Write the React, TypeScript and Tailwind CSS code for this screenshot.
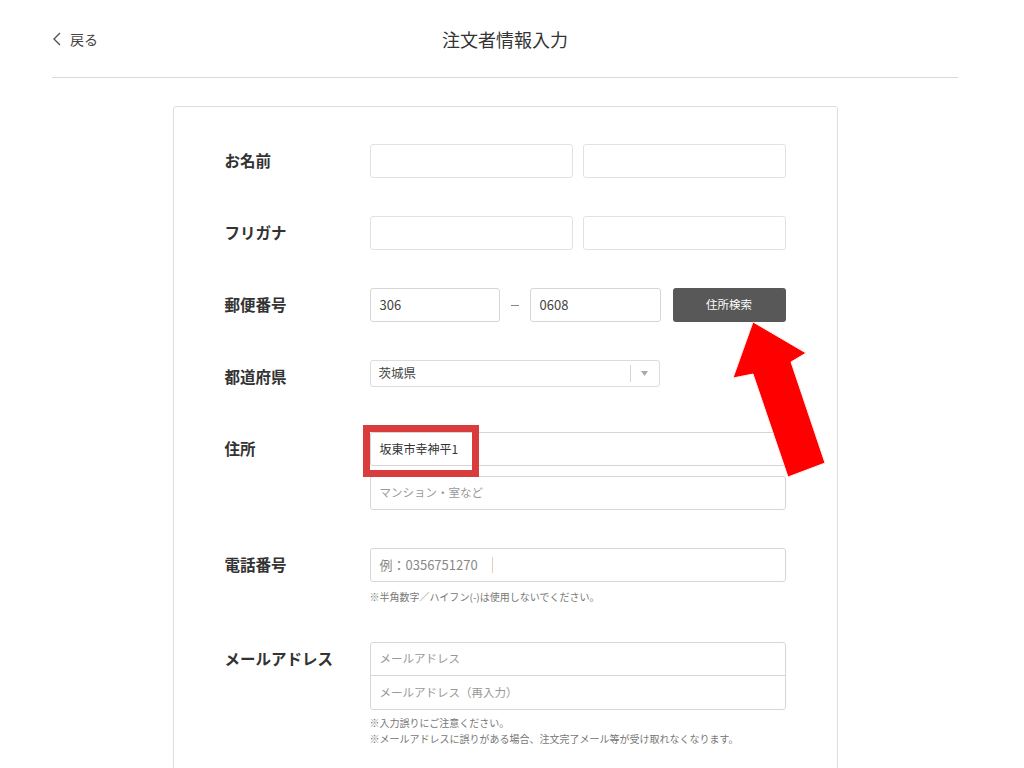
import React from "react";

const font = "font-['Noto_Sans_CJK_JP','Noto_Sans',sans-serif]";

function Row({ label, children }: { label: string; children: React.ReactNode }) {
  return (
    <div className="flex">
      <div className="w-[145px] h-[34px] flex items-center text-[15.5px] font-bold text-[#333] shrink-0">
        {label}
      </div>
      <div className="w-[416px]">{children}</div>
    </div>
  );
}

function Box({ className = "", children }: { className?: string; children?: React.ReactNode }) {
  return (
    <div className={`h-[34px] border border-[#d6d6d6] rounded-[3px] bg-white flex items-center px-[9px] ${className}`}>
      {children}
    </div>
  );
}

export default function App() {
  return (
    <div className={`relative w-[1024px] min-h-[768px] bg-white ${font} text-[#333]`}>
      <div className="ml-[52px] w-[906px]">
        <header className="relative h-[78px] border-b border-[#d9d9d9] flex items-center pt-[2px]">
          <div className="flex items-center gap-[8px] text-[14px] text-[#444]">
            <svg width="10" height="16" viewBox="0 0 10 16" className="mt-[-1px]">
              <polyline points="8,2 2,8 8,14" fill="none" stroke="#555" strokeWidth="1.4" />
            </svg>
            <span>戻る</span>
          </div>
          <div className="absolute left-0 right-0 text-center text-[18px] text-[#333] pointer-events-none">
            注文者情報入力
          </div>
        </header>

        <div className="mx-auto mt-[28px] w-[665px] border border-[#dedede] rounded-[3px] pt-[37px] pl-[51px] pb-[60px]">
          <div className="flex flex-col gap-[38px]">
            <Row label="お名前">
              <div className="grid grid-cols-2 gap-[10px]">
                <Box className="border-[#e2e2e2]" />
                <Box className="border-[#e2e2e2]" />
              </div>
            </Row>

            <Row label="フリガナ">
              <div className="grid grid-cols-2 gap-[10px]">
                <Box className="border-[#e2e2e2]" />
                <Box className="border-[#e2e2e2]" />
              </div>
            </Row>

            <Row label="郵便番号">
              <div className="flex items-center">
                <Box className="w-[130px] text-[13px] text-[#444]">306</Box>
                <div className="w-[30px] flex justify-center">
                  <div className="w-[8px] h-[1px] bg-[#888]" />
                </div>
                <Box className="w-[131px] text-[13px] text-[#444]">0608</Box>
                <div className="ml-[12px] w-[113px] h-[34px] rounded-[3px] bg-[#585858] flex items-center justify-center text-white text-[11.5px]">
                  住所検索
                </div>
              </div>
            </Row>

            <Row label="都道府県">
              <div className="w-[290px] h-[27px] border border-[#dcdcdc] rounded-[3px] flex items-center">
                <div className="flex-1 pl-[8px] text-[12.5px] text-[#444]">茨城県</div>
                <div className="w-[1px] h-[17px] bg-[#d4d4d4]" />
                <div className="w-[28px] flex justify-center">
                  <svg width="7" height="5" viewBox="0 0 7 5">
                    <polygon points="0,0 7,0 3.5,5" fill="#aaa" />
                  </svg>
                </div>
              </div>
            </Row>

            <Row label="住所">
              <div className="flex flex-col gap-[10px]">
                <div className="relative">
                  <Box className="text-[12px] text-[#333]">坂東市幸神平1</Box>
                  <div className="absolute left-[-7px] top-[-7px] w-[116px] h-[52px] border-[7px] border-[#d83c3c]" />
                </div>
                <Box className="text-[11.5px] text-[#999]">マンション・室など</Box>
              </div>
            </Row>

            <Row label="電話番号">
              <Box className="text-[13px] text-[#888]">
                <span>例：0356751270</span>
                <span className="ml-[14px] w-[1px] h-[16px] bg-[#f0c8b8]" />
              </Box>
              <div className="mt-[8px] text-[10px] leading-[14px] text-[#777]">
                ※半角数字／ハイフン(-)は使用しないでください。
              </div>
            </Row>

            <Row label="メールアドレス">
              <div className="border border-[#d6d6d6] rounded-[3px]">
                <div className="h-[33px] flex items-center px-[9px] text-[11.5px] text-[#999] border-b border-[#d6d6d6]">
                  メールアドレス
                </div>
                <div className="h-[33px] flex items-center px-[9px] text-[11.5px] text-[#999]">
                  メールアドレス（再入力）
                </div>
              </div>
              <div className="mt-[5px] text-[10px] leading-[16px] text-[#777]">
                <div>※入力誤りにご注意ください。</div>
                <div>※メールアドレスに誤りがある場合、注文完了メール等が受け取れなくなります。</div>
              </div>
            </Row>
          </div>
        </div>
      </div>

      <svg
        className="absolute left-0 top-0 pointer-events-none"
        width="1024"
        height="768"
        viewBox="0 0 1024 768"
      >
        <polygon
          points="753,322 806,353 791,362 825,463 788,477 753,374 733,378"
          fill="#ff0000"
          stroke="#ffecec"
          strokeWidth="1"
          strokeLinejoin="round"
        />
      </svg>
    </div>
  );
}
